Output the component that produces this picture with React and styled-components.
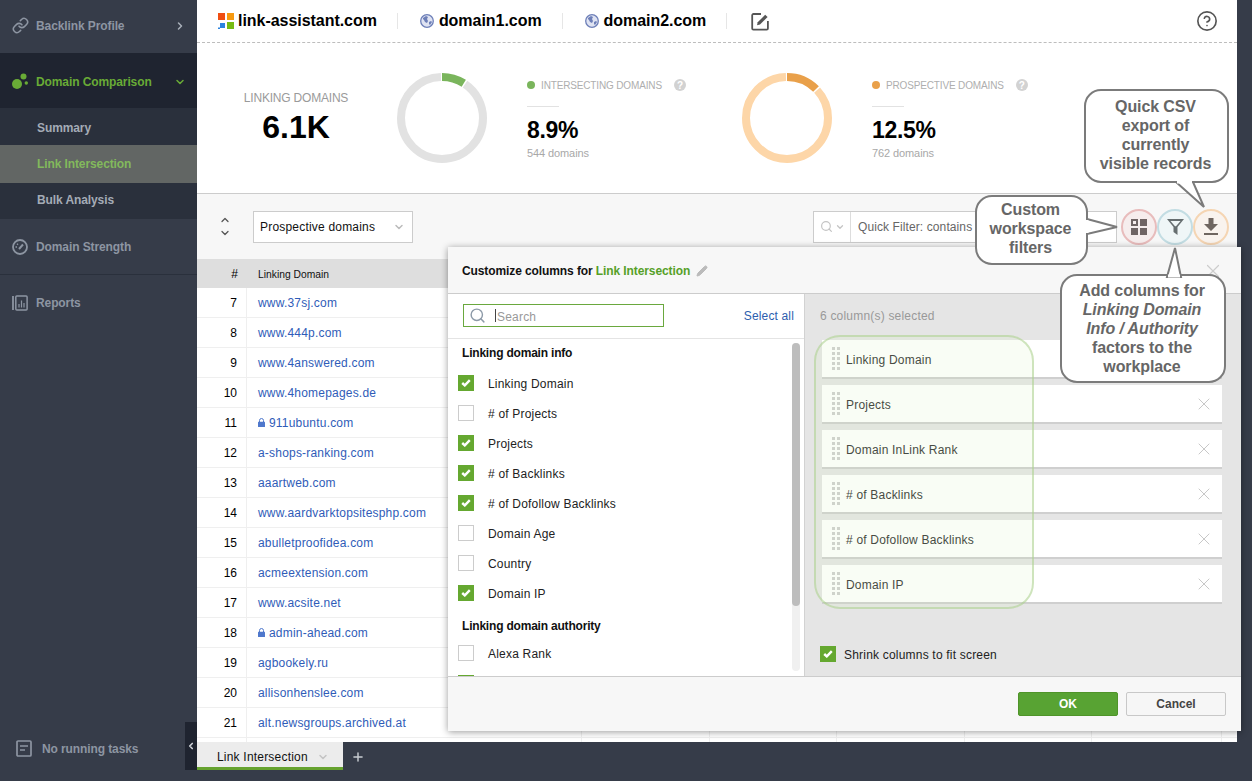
import React from 'react'
import styled, { createGlobalStyle } from 'styled-components'
import { Search, X, CircleHelp, Plus, ChevronDown, ChevronRight, ChevronLeft, ChevronUp, Pencil, Link as LinkIcon } from 'lucide-react'

const GlobalStyle = createGlobalStyle`
  html, body {
    margin: 0;
    padding: 0;
    background: #363c49;
    overflow: hidden;
  }
  * { box-sizing: border-box; }
  body, input, button {
    font-family: "Liberation Sans", Arial, sans-serif;
    font-size: 12px;
    letter-spacing: 0.2px;
  }
`

const Page = styled.div`
  position: relative;
  display: flex;
  width: 1252px;
  height: 781px;
  overflow: hidden;
  background: #363c49;
`

/* sidebar */
const Sidebar = styled.aside`
  display: flex;
  flex-direction: column;
  width: 197px;
  height: 100%;
  font-weight: bold;
  letter-spacing: -0.1px;
  color: #8d95a2;
`
const NavItem = styled.div`
  display: flex;
  align-items: center;
  height: ${p => p.$h || 56}px;
  padding: ${p => p.$pt || 0}px 11px ${p => p.$pb || 0}px 12px;
  background: ${p => (p.$open ? '#1f2430' : 'transparent')};
  color: ${p => (p.$open ? '#69ab36' : 'inherit')};
  border-bottom: ${p => (p.$line ? '1px solid #2a303c' : 'none')};
`
const NavIcon = styled.span`
  display: flex;
  width: 24px;
  flex: none;
`
const NavArrow = styled.span`
  display: flex;
  margin-left: auto;
`
const SubMenu = styled.div`
  display: flex;
  flex-direction: column;
  background: #2a303c;
  padding: 2px 0;
`
const SubItem = styled.div`
  display: flex;
  align-items: center;
  height: ${p => p.$h}px;
  padding-left: 37px;
  color: ${p => (p.$active ? '#82b95c' : '#a4abb6')};
  background: ${p => (p.$active ? '#626664' : 'transparent')};
`
const Tasks = styled.div`
  display: flex;
  align-items: center;
  gap: 10px;
  margin-top: auto;
  margin-bottom: 24px;
  padding-left: 16px;
`

/* main column */
const Column = styled.div`
  display: flex;
  flex-direction: column;
  width: 1040px;
  height: 100%;
`
const Main = styled.main`
  display: flex;
  flex-direction: column;
  height: 742px;
  flex: none;
  background: #fff;
  overflow: hidden;
`
const DomainBar = styled.header`
  display: flex;
  align-items: center;
  height: 43px;
  flex: none;
  padding: 0 19px 0 21px;
  border-bottom: 1px dashed #bdbdbd;
`
const DomainTab = styled.div`
  display: flex;
  align-items: center;
  gap: ${p => (p.$logo ? 4 : 5)}px;
  padding-left: ${p => (p.$logo ? 0 : 22)}px;
  padding-right: 20px;
  height: 16px;
  border-right: 1px solid #e6e6e6;
  font-size: 16px;
  font-weight: bold;
  letter-spacing: -0.04px;
  color: #000;
`
const EditBtn = styled.span`
  display: flex;
  margin-left: 24px;
`
const HelpBtn = styled.span`
  display: flex;
  margin-left: auto;
  color: #555;
`

const Stats = styled.section`
  display: flex;
  align-items: center;
  height: 151px;
  flex: none;
  border-bottom: 1px solid #ccc;
`
const Total = styled.div`
  width: 198px;
  margin-right: 2px;
  text-align: center;
  flex: none;
`
const TotalLabel = styled.div`
  font-size: 12px;
  letter-spacing: -0.2px;
  color: #9a9a9a;
  line-height: 14px;
`
const TotalValue = styled.div`
  font-size: 32px;
  font-weight: bold;
  letter-spacing: 0;
  color: #000;
  line-height: 38px;
  margin-top: 3px;
`
const Ring = styled.svg`
  width: 90px;
  height: 90px;
  flex: none;
`
const Info = styled.div`
  width: ${p => p.$w}px;
  margin-left: 40px;
  padding-top: 2px;
  flex: none;
`
const InfoHead = styled.div`
  display: flex;
  align-items: center;
  height: 14px;
  font-size: 10px;
  letter-spacing: -0.15px;
  color: #aeaeae;
  white-space: nowrap;
`
const Dot = styled.i`
  width: 8px;
  height: 8px;
  border-radius: 50%;
  margin-right: 6px;
  background: ${p => p.$c};
`
const HelpDot = styled.i`
  display: flex;
  align-items: center;
  justify-content: center;
  width: 12px;
  height: 12px;
  margin-left: 12px;
  border-radius: 50%;
  background: #d2d2d2;
  color: #fff;
  font-size: 10px;
  font-style: normal;
  font-weight: bold;
`
const InfoRule = styled.div`
  width: 32px;
  height: 1px;
  margin-top: 14px;
  background: #e2e2e2;
`
const InfoValue = styled.div`
  margin-top: 9px;
  font-size: 23px;
  font-weight: bold;
  letter-spacing: -0.3px;
  line-height: 28px;
  color: #000;
`
const InfoSub = styled.div`
  margin-top: 3px;
  font-size: 11px;
  letter-spacing: -0.1px;
  line-height: 13px;
  color: #a8a8a8;
`

const Toolbar = styled.div`
  display: flex;
  align-items: center;
  height: 65px;
  flex: none;
  padding: 0 8px 0 22px;
  background: #f7f7f7;
`
const SortBtn = styled.span`
  display: flex;
  flex-direction: column;
  gap: 1px;
  width: 12px;
  margin-right: 22px;
  color: #555;
`
const Select = styled.div`
  display: flex;
  align-items: center;
  justify-content: space-between;
  width: 160px;
  height: 32px;
  padding: 0 7px 0 6px;
  background: #fff;
  border: 1px solid #ccc;
  color: #111;
`
const Filter = styled.div`
  display: flex;
  align-items: center;
  width: 304px;
  height: 32px;
  margin-left: auto;
  margin-right: 4px;
  background: #fff;
  border: 1px solid #ccc;
  color: #666;
`
const FilterIcon = styled.div`
  display: flex;
  align-items: center;
  gap: 2px;
  width: 37px;
  height: 100%;
  padding-left: 6px;
  border-right: 1px solid #ddd;
  color: #c4c4c4;
`
const FilterText = styled.span`
  padding-left: 7px;
  letter-spacing: 0.1px;
`
const RoundBtn = styled.span`
  display: flex;
  align-items: center;
  justify-content: center;
  width: 36px;
  height: 36px;
  flex: none;
  border-radius: 50%;
  border: 2px solid ${p => p.$b};
  background: ${p => p.$bg};
`

/* data table */
const Table = styled.div`
  flex: 1;
  overflow: hidden;
`
const TableRow = styled.div`
  display: grid;
  grid-template-columns: 50px 335px 128px 127px 128px 127px 130px 15px;
  height: ${p => (p.$head ? 29 : 30)}px;
  background: ${p => (p.$head ? '#dedede' : '#fff')};
  border-bottom: ${p => (p.$head ? 'none' : '1px solid #efefef')};
`
const Cell = styled.div`
  display: flex;
  align-items: center;
  gap: 4px;
  padding: ${p => (p.$head ? 2 : 0)}px 0 0 11px;
  border-right: ${p => (p.$head ? 'none' : '1px solid #efefef')};
  font-size: ${p => (p.$head ? 10.3 : 12)}px;
  letter-spacing: ${p => (p.$head ? 0 : 0.2)}px;
  color: ${p => (p.$head ? '#111' : '#2f5cb8')};
`
const NumCell = styled(Cell)`
  justify-content: flex-end;
  padding: 0 9px 0 0;
  color: #000;
  font-size: 12px;
  letter-spacing: 0;
`

/* bottom tabs */
const TabBar = styled.div`
  display: flex;
  align-items: center;
  height: 28px;
  flex: none;
`
const Tab = styled.div`
  display: flex;
  align-items: center;
  gap: 9px;
  width: 146px;
  height: 100%;
  padding: 5px 0 0 20px;
  background: #ececec;
  border-bottom: 3px solid #66a22f;
  color: #111;
`
const AddTab = styled.span`
  display: flex;
  margin: 2px 0 0 8px;
  color: #c7cbd1;
`
const Collapse = styled.div`
  position: absolute;
  left: 185px;
  top: 722px;
  display: flex;
  align-items: center;
  justify-content: center;
  width: 12px;
  height: 48px;
  background: #1f2430;
  color: #cfd3d9;
`

/* customize columns dialog */
const Modal = styled.div`
  position: absolute;
  left: 448px;
  top: 247px;
  display: flex;
  flex-direction: column;
  width: 793px;
  height: 484px;
  background: #f7f7f7;
  box-shadow: 0 1px 7px rgba(0, 0, 0, 0.4);
`
const ModalHead = styled.div`
  display: flex;
  align-items: center;
  gap: 6px;
  height: 47px;
  flex: none;
  padding: 1px 17px 0 14px;
  border-bottom: 1px solid #ccc;
  font-weight: bold;
  letter-spacing: -0.1px;
  color: #111;
`
const Accent = styled.span`
  color: #56a028;
`
const ModalClose = styled.span`
  display: flex;
  margin-left: auto;
  color: #ccc;
`
const ModalBody = styled.div`
  display: flex;
  flex: 1;
  min-height: 0;
`
const LeftPane = styled.div`
  position: relative;
  display: flex;
  flex-direction: column;
  width: 356px;
  flex: none;
  background: #fff;
`
const SearchRow = styled.div`
  display: flex;
  align-items: center;
  justify-content: space-between;
  height: 45px;
  flex: none;
  padding: 0 10px 2px 15px;
  border-bottom: 1px solid #e4e4e4;
`
const SearchBox = styled.div`
  display: flex;
  align-items: center;
  width: 201px;
  height: 23px;
  padding-left: 5px;
  border: 1px solid #6aa83e;
  color: #8d9aa8;
`
const SearchInput = styled.input`
  width: 160px;
  height: 13px;
  margin: 1px 0 0 9px;
  padding: 2px 0 0 1px;
  border: none;
  border-left: 1px solid #444;
  outline: none;
  background: transparent;
  font-size: 12px;
  &::placeholder { color: #999; opacity: 1; }
`
const SelectAll = styled.span`
  padding-top: 1px;
  letter-spacing: 0.15px;
  color: #2d5eae;
`
const CheckList = styled.div`
  flex: 1;
  overflow: hidden;
  padding-left: 10px;
`
const Section = styled.div`
  display: flex;
  align-items: center;
  height: ${p => (p.$first ? 29 : 30)}px;
  padding: ${p => (p.$first ? 0 : 6)}px 0 ${p => (p.$first ? 2 : 0)}px 4px;
  font-weight: bold;
  letter-spacing: -0.2px;
  color: #111;
`
const CheckRow = styled.div`
  display: flex;
  align-items: center;
  gap: ${p => p.$gap || 14}px;
  height: 30px;
  color: #222;
`
const RowLabel = styled.span`
  padding-top: 2px;
`
const Box = styled.span`
  display: flex;
  align-items: center;
  justify-content: center;
  width: 16px;
  height: 16px;
  flex: none;
  background: ${p => (p.$on ? '#65a830' : '#fff')};
  border: ${p => (p.$on ? 'none' : '1px solid #ccc')};
`
const ScrollTrack = styled.div`
  position: absolute;
  right: 4px;
  top: 49px;
  width: 8px;
  height: 328px;
  border-radius: 4px;
  background: #f0f0f0;
`
const ScrollThumb = styled.div`
  width: 100%;
  height: 263px;
  border-radius: 4px;
  background: #bdbdbd;
`
const RightPane = styled.div`
  position: relative;
  display: flex;
  flex-direction: column;
  flex: 1;
  padding: 0 19px 0 17px;
  background: #e5e5e5;
  border-left: 1px solid #d2d2d2;
`
const SelectedCount = styled.div`
  height: 46px;
  flex: none;
  padding-top: 15px;
  margin-left: -2px;
  color: #999;
  line-height: 14px;
`
const ColumnCard = styled.div`
  display: flex;
  align-items: center;
  gap: 6px;
  height: 39px;
  flex: none;
  margin-bottom: 6px;
  padding: 0 8px 0 10px;
  background: #fff;
  border-bottom: 2px solid #cfcfcf;
  color: #333;
`
const CardClose = styled.span`
  display: flex;
  margin-left: auto;
  color: #c8c8c8;
`
const Highlight = styled.div`
  position: absolute;
  left: 9px;
  top: 41px;
  width: 220px;
  height: 274px;
  border: 2px solid rgba(170, 205, 140, 0.55);
  border-radius: 26px;
  background: rgba(205, 240, 175, 0.13);
`
const ShrinkRow = styled(CheckRow)`
  margin: 29px 0 0 -2px;
`
const ModalFoot = styled.div`
  display: flex;
  align-items: center;
  justify-content: flex-end;
  gap: 8px;
  height: 55px;
  flex: none;
  padding-right: 15px;
  border-top: 1px solid #ccc;
`
const FootBtn = styled.button`
  width: 100px;
  height: 24px;
  padding: 0;
  border-radius: 2px;
  border: 1px solid ${p => (p.$primary ? '#4f9429' : '#c8c8c8')};
  background: ${p => (p.$primary ? '#58a333' : '#f6f6f6')};
  color: ${p => (p.$primary ? '#fff' : '#444')};
  font-weight: bold;
  font-size: 12px;
  letter-spacing: 0;
`

/* tutorial callouts */
const Callout = styled.div`
  position: absolute;
  left: ${p => p.$x}px;
  top: ${p => p.$y}px;
  display: flex;
  align-items: center;
  justify-content: center;
  width: ${p => p.$w}px;
  height: ${p => p.$h}px;
  padding: 0 2px ${p => p.$pb}px 0;
  background: #fff;
  border: 2px solid #7b7b7b;
  border-radius: 17px;
  font-size: 16px;
  font-weight: bold;
  letter-spacing: -0.1px;
  line-height: 19px;
  color: #666;
  text-align: center;
`
const Tail = styled.svg`
  position: absolute;
  overflow: visible;
  left: 0;
  top: 0;
  width: 1px;
  height: 1px;
`

function Logo() {
  return (
    <svg width="16" height="16" viewBox="0 0 16 16">
      <rect x="0" y="0" width="7" height="7" fill="#f04e12" />
      <rect x="9" y="0" width="7" height="7" fill="#f79a0f" />
      <rect x="2" y="10" width="5" height="5" fill="#2b84e0" />
      <rect x="0" y="14.5" width="2" height="1.5" fill="#2b84e0" />
      <rect x="9" y="9" width="7" height="7" fill="#76bb12" />
    </svg>
  )
}

function Globe() {
  return (
    <svg width="14" height="14" viewBox="0 0 14 14">
      <circle cx="7" cy="7" r="6.3" fill="#dfe3f2" stroke="#6d7fb8" strokeWidth="1.3" />
      <path d="M3 4l3-2 2 1-1 2 1 2-1 2-2-1-1-2-1-1zM9 8l2-1 1 1-2 3-1-1z" fill="#6d7fb8" />
    </svg>
  )
}

function EditIcon() {
  return (
    <svg width="19" height="19" viewBox="0 0 19 19" fill="none">
      <path d="M10 2H2.5A1.2 1.2 0 0 0 1.2 3.2v13.3a1.2 1.2 0 0 0 1.2 1.2h13.3a1.2 1.2 0 0 0 1.2-1.2V9" stroke="#555" strokeWidth="1.8" />
      <path d="M6 13.2l.7-3L14.2 2.7l2.4 2.4L9 12.5z" fill="#555" />
    </svg>
  )
}

function ComparisonIcon() {
  return (
    <svg width="16" height="17" viewBox="0 0 16 17" fill="#69ab36">
      <circle cx="5" cy="11" r="5" />
      <circle cx="11.5" cy="3.5" r="3" />
      <circle cx="14.3" cy="10" r="1.7" />
    </svg>
  )
}

function GaugeIcon() {
  return (
    <svg width="16" height="16" viewBox="0 0 16 16" fill="none" stroke="#8d95a2">
      <circle cx="8" cy="8" r="7" strokeWidth="1.8" />
      <path d="M7 10l4-4.5" strokeWidth="2" />
      <path d="M3.5 8H5M5 4.7l1 1" strokeWidth="1.3" />
    </svg>
  )
}

function ReportsIcon() {
  return (
    <svg width="16" height="16" viewBox="0 0 16 16" fill="none" stroke="#8d95a2">
      <path d="M1 1v14" strokeWidth="1.8" />
      <rect x="3.8" y="1" width="11.3" height="14" rx="1" strokeWidth="1.5" />
      <path d="M7 12.5V9M9.5 12.5v-7M12 12.5V8" strokeWidth="1.2" />
    </svg>
  )
}

function TasksIcon() {
  return (
    <svg width="16" height="17" viewBox="0 0 16 17" fill="none" stroke="#8d95a2">
      <rect x="1" y="1" width="14" height="15" rx="1" strokeWidth="1.7" />
      <path d="M4 6h8M4 10h5" strokeWidth="1.7" />
    </svg>
  )
}

function LockIcon() {
  return (
    <svg width="7" height="9" viewBox="0 0 7 9">
      <path d="M1.5 4V2.5a2 2 0 0 1 4 0V4" fill="none" stroke="#4f78cc" strokeWidth="1" />
      <rect x="0" y="3.8" width="7" height="5.2" rx="0.5" fill="#4f78cc" />
    </svg>
  )
}

function Donut({ track, arc, percent }) {
  const r = 41
  const c = 2 * Math.PI * r
  const gap = 1.5
  const len = (c * percent) / 100
  return (
    <Ring viewBox="0 0 90 90">
      <g fill="none" strokeWidth="8" transform="rotate(-90 45 45)">
        <circle cx="45" cy="45" r={r} stroke={track} strokeDasharray={`${c - len - gap * 2} ${len + gap * 2}`} strokeDashoffset={-(len + gap)} />
        <circle cx="45" cy="45" r={r} stroke={arc} strokeDasharray={`${len} ${c - len}`} />
      </g>
    </Ring>
  )
}

function Check() {
  return (
    <svg width="10" height="8" viewBox="0 0 10 8">
      <path d="M1.2 4l2.6 2.4 5-5.2" fill="none" stroke="#fff" strokeWidth="2.4" />
    </svg>
  )
}

function Grip() {
  const dots = []
  for (let i = 0; i < 5; i++) {
    dots.push(<rect key={`a${i}`} x="0" y={i * 5} width="3" height="3" />)
    dots.push(<rect key={`b${i}`} x="5" y={i * 5} width="3" height="3" />)
  }
  return (
    <svg width="8" height="23" viewBox="0 0 8 23" fill="#cfcfcf">
      {dots}
    </svg>
  )
}

const rows = [
  [7, 'www.37sj.com'],
  [8, 'www.444p.com'],
  [9, 'www.4answered.com'],
  [10, 'www.4homepages.de'],
  [11, '911ubuntu.com', true],
  [12, 'a-shops-ranking.com'],
  [13, 'aaartweb.com'],
  [14, 'www.aardvarktopsitesphp.com'],
  [15, 'abulletproofidea.com'],
  [16, 'acmeextension.com'],
  [17, 'www.acsite.net'],
  [18, 'admin-ahead.com', true],
  [19, 'agbookely.ru'],
  [20, 'allisonhenslee.com'],
  [21, 'alt.newsgroups.archived.at'],
  ['', ''],
]

const infoChecks = [
  ['Linking Domain', true],
  ['# of Projects', false],
  ['Projects', true],
  ['# of Backlinks', true],
  ['# of Dofollow Backlinks', true],
  ['Domain Age', false],
  ['Country', false],
  ['Domain IP', true],
]

const selected = ['Linking Domain', 'Projects', 'Domain InLink Rank', '# of Backlinks', '# of Dofollow Backlinks', 'Domain IP']

export default function App() {
  return (
    <Page>
      <GlobalStyle />
      <Sidebar>
        <NavItem $h={53} $pb={2}>
          <NavIcon><LinkIcon size={17} color="#8d95a2" strokeWidth={2.2} /></NavIcon>
          Backlink Profile
          <NavArrow><ChevronRight size={12} strokeWidth={3} color="#aab0ba" /></NavArrow>
        </NavItem>
        <NavItem $h={55} $pt={2} $open>
          <NavIcon><ComparisonIcon /></NavIcon>
          Domain Comparison
          <NavArrow><ChevronDown size={12} strokeWidth={3} color="#69ab36" /></NavArrow>
        </NavItem>
        <SubMenu>
          <SubItem $h={35}>Summary</SubItem>
          <SubItem $h={38} $active>Link Intersection</SubItem>
          <SubItem $h={34}>Bulk Analysis</SubItem>
        </SubMenu>
        <NavItem $line>
          <NavIcon><GaugeIcon /></NavIcon>
          Domain Strength
        </NavItem>
        <NavItem>
          <NavIcon><ReportsIcon /></NavIcon>
          Reports
        </NavItem>
        <Tasks>
          <TasksIcon />
          No running tasks
        </Tasks>
      </Sidebar>

      <Column>
        <Main>
          <DomainBar>
            <DomainTab $logo><Logo />link-assistant.com</DomainTab>
            <DomainTab><Globe />domain1.com</DomainTab>
            <DomainTab><Globe />domain2.com</DomainTab>
            <EditBtn><EditIcon /></EditBtn>
            <HelpBtn><CircleHelp size={22} strokeWidth={1.8} /></HelpBtn>
          </DomainBar>

          <Stats>
            <Total>
              <TotalLabel>LINKING DOMAINS</TotalLabel>
              <TotalValue>6.1K</TotalValue>
            </Total>
            <Donut track="#e2e2e2" arc="#7ab55c" percent={8.9} />
            <Info $w={215}>
              <InfoHead><Dot $c="#7ab55c" />INTERSECTING DOMAINS<HelpDot>?</HelpDot></InfoHead>
              <InfoRule />
              <InfoValue>8.9%</InfoValue>
              <InfoSub>544 domains</InfoSub>
            </Info>
            <Donut track="#fdd6a8" arc="#e9a04a" percent={12.5} />
            <Info $w={175}>
              <InfoHead><Dot $c="#e9a04a" />PROSPECTIVE DOMAINS<HelpDot>?</HelpDot></InfoHead>
              <InfoRule />
              <InfoValue>12.5%</InfoValue>
              <InfoSub>762 domains</InfoSub>
            </Info>
          </Stats>

          <Toolbar>
            <SortBtn>
              <ChevronUp size={12} strokeWidth={2.5} />
              <ChevronDown size={12} strokeWidth={2.5} />
            </SortBtn>
            <Select>
              Prospective domains
              <ChevronDown size={12} strokeWidth={3} color="#bbb" />
            </Select>
            <Filter>
              <FilterIcon>
                <Search size={13} strokeWidth={2.2} />
                <ChevronDown size={10} strokeWidth={3} />
              </FilterIcon>
              <FilterText>Quick Filter: contains</FilterText>
            </Filter>
            <RoundBtn $b="#e8bcbc" $bg="#f6eded">
              <svg width="16" height="16" viewBox="0 0 16 16" fill="#6f6464">
                <path fillRule="evenodd" d="M0 0h7v7H0zM2 2v3h3V2z" />
                <rect x="9" y="0" width="7" height="7" />
                <rect x="0" y="9" width="7" height="7" />
                <rect x="9" y="9" width="7" height="7" />
              </svg>
            </RoundBtn>
            <RoundBtn $b="#c3dde3" $bg="#eff6f7">
              <svg width="17" height="16" viewBox="0 0 17 16" fill="#666e70">
                <path fillRule="evenodd" d="M0 0h17L10.5 8v8l-4-3V8zM3.5 2l4.5 5.3h1L13.5 2z" />
              </svg>
            </RoundBtn>
            <RoundBtn $b="#f5d5b3" $bg="#f9f3ee">
              <svg width="14" height="17" viewBox="0 0 14 17" fill="#6f6660">
                <path d="M4.5 0h5v6H14l-7 7-7-7h4.5z" />
                <rect x="0" y="15" width="14" height="2" />
              </svg>
            </RoundBtn>
          </Toolbar>

          <Table>
            <TableRow $head>
              <NumCell $head>#</NumCell>
              <Cell $head>Linking Domain</Cell>
            </TableRow>
            {rows.map(([n, domain, secure]) => (
              <TableRow key={domain}>
                <NumCell>{n}</NumCell>
                <Cell>
                  {secure && <LockIcon />}
                  {domain}
                </Cell>
                <Cell /><Cell /><Cell /><Cell /><Cell />
              </TableRow>
            ))}
          </Table>
        </Main>
        <TabBar>
          <Tab>
            Link Intersection
            <ChevronDown size={12} strokeWidth={3} color="#c4c4c4" />
          </Tab>
          <AddTab><Plus size={14} strokeWidth={2.5} /></AddTab>
        </TabBar>
      </Column>

      <Collapse><ChevronLeft size={10} strokeWidth={4} /></Collapse>

      <Modal>
        <ModalHead>
          <span>Customize columns for <Accent>Link Intersection</Accent></span>
          <Pencil size={12} color="#bbb" fill="#bbb" />
          <ModalClose><X size={22} strokeWidth={1.3} /></ModalClose>
        </ModalHead>
        <ModalBody>
          <LeftPane>
            <SearchRow>
              <SearchBox>
                <Search size={17} strokeWidth={2} />
                <SearchInput placeholder="Search" readOnly />
              </SearchBox>
              <SelectAll>Select all</SelectAll>
            </SearchRow>
            <CheckList>
              <Section $first>Linking domain info</Section>
              {infoChecks.map(([label, on]) => (
                <CheckRow key={label}>
                  <Box $on={on}>{on && <Check />}</Box>
                  <RowLabel>{label}</RowLabel>
                </CheckRow>
              ))}
              <Section>Linking domain authority</Section>
              <CheckRow>
                <Box />
                <RowLabel>Alexa Rank</RowLabel>
              </CheckRow>
              <CheckRow>
                <Box $on><Check /></Box>
              </CheckRow>
            </CheckList>
            <ScrollTrack><ScrollThumb /></ScrollTrack>
          </LeftPane>
          <RightPane>
            <SelectedCount>6 column(s) selected</SelectedCount>
            {selected.map(label => (
              <ColumnCard key={label}>
                <Grip />
                <RowLabel>{label}</RowLabel>
                <CardClose><X size={20} strokeWidth={1.2} /></CardClose>
              </ColumnCard>
            ))}
            <ShrinkRow $gap={8}>
              <Box $on><Check /></Box>
              <RowLabel>Shrink columns to fit screen</RowLabel>
            </ShrinkRow>
            <Highlight />
          </RightPane>
        </ModalBody>
        <ModalFoot>
          <FootBtn $primary>OK</FootBtn>
          <FootBtn>Cancel</FootBtn>
        </ModalFoot>
      </Modal>

      <Callout $x={1084} $y={89} $w={145} $h={94} $pb={2}>
        <span>Quick CSV<br />export of<br />currently<br />visible records</span>
        <Tail><polygon points="90,91 118,116 107,91" fill="#fff" stroke="#7b7b7b" strokeWidth="2" /><path d="M91,91H106" stroke="#fff" strokeWidth="3" /></Tail>
      </Callout>
      <Callout $x={975} $y={195} $w={113} $h={70} $pb={4}>
        <span>Custom<br />workspace<br />filters</span>
        <Tail><polygon points="110,22 140,30 110,37" fill="#fff" stroke="#7b7b7b" strokeWidth="2" /><path d="M110,23V36" stroke="#fff" strokeWidth="3" /></Tail>
      </Callout>
      <Callout $x={1060} $y={274} $w={166} $h={109} $pb={0}>
        <span>Add columns for<br /><em>Linking Domain<br />Info / Authority</em><br />factors to the<br />workplace</span>
        <Tail><polygon points="105,1 113,-28 119,1" fill="#fff" stroke="#7b7b7b" strokeWidth="2" /><path d="M106,0H118" stroke="#fff" strokeWidth="3" /></Tail>
      </Callout>
    </Page>
  )
}
